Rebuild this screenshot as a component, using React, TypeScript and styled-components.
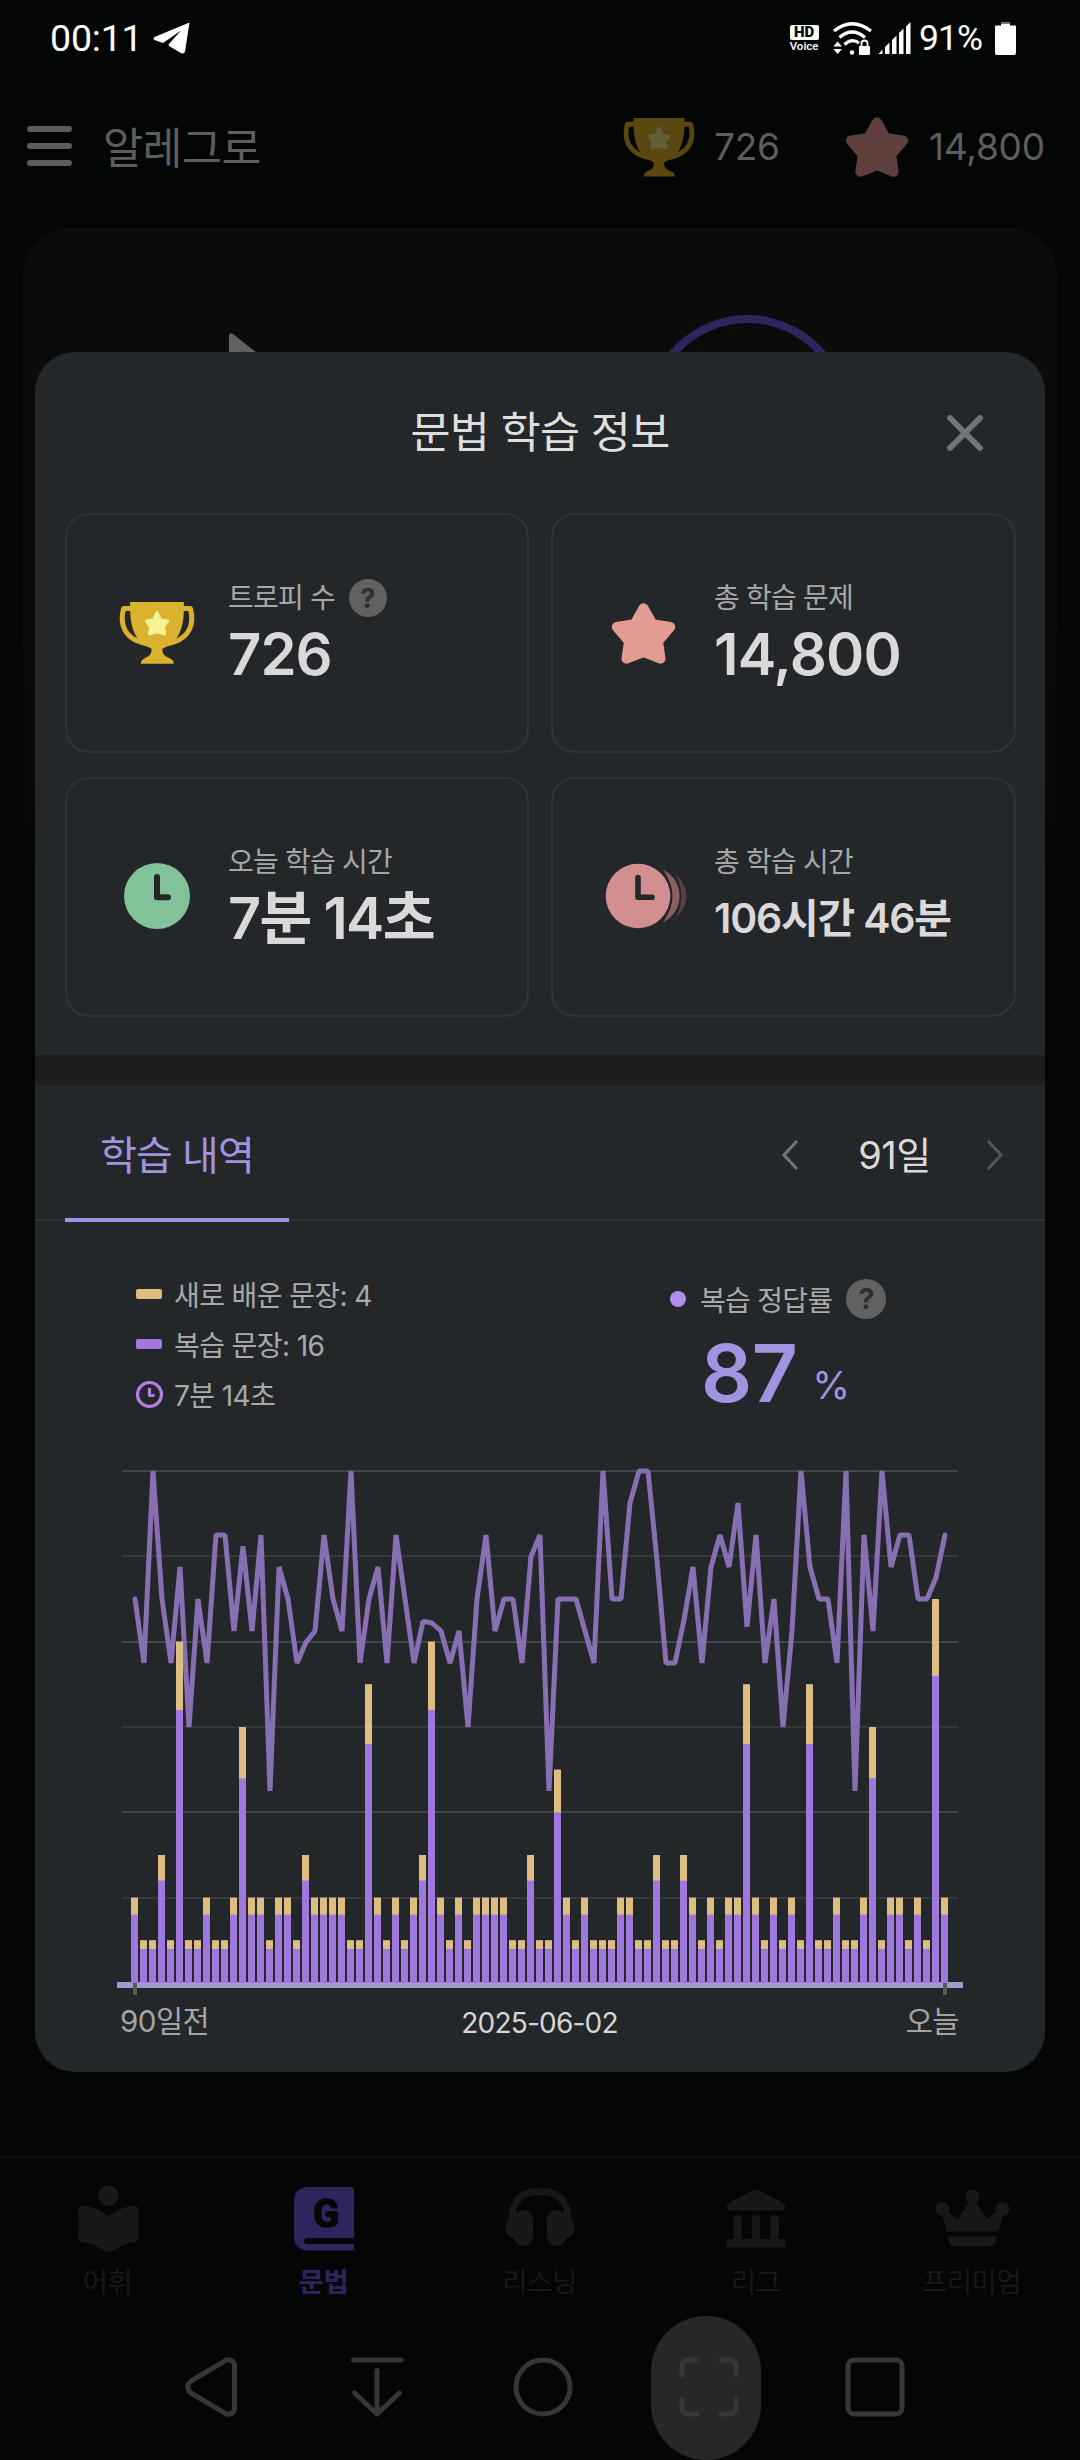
import React from "react";
import styled, { createGlobalStyle } from "styled-components";

const GlobalStyle = createGlobalStyle`
  body { margin: 0; background: #040505; }
  * { box-sizing: border-box; }
  svg { display: block; overflow: visible; flex: none; }
`;

const SANS = `Inter, "Noto Sans CJK KR", sans-serif`;

/* ---------- screen behind the dialog ---------- */

const Screen = styled.div`
  position: relative;
  width: 1080px;
  height: 2460px;
  overflow: hidden;
  display: flex;
  flex-direction: column;
  background: #040505;
  font-family: ${SANS};
`;

const StatusBar = styled.div`
  height: 76px;
  display: flex;
  align-items: center;
  justify-content: space-between;
  padding: 0 64px 0 50px;
  color: #fff;
  font-family: Roboto, sans-serif;
`;

const StatusGroup = styled.div`
  display: flex;
  align-items: center;
`;

const StatusItem = styled.div<{ $before: number }>`
  margin-left: ${(p) => p.$before}px;
`;

const StatusText = styled.span<{ $size: number; $spacing?: number }>`
  font-size: ${(p) => p.$size}px;
  letter-spacing: ${(p) => p.$spacing ?? 0}px;
  line-height: 40px;
  white-space: nowrap;
`;

const HdBadge = styled.div`
  width: 30px;
  display: flex;
  flex-direction: column;
  align-items: center;
  padding-top: 1px;
`;

const HdBox = styled.div`
  width: 29px;
  height: 15px;
  border-radius: 2px;
  background: #fff;
  color: #050505;
  font-size: 15px;
  font-weight: 900;
  line-height: 15.5px;
  text-align: center;
`;

const HdCaption = styled.div`
  font-size: 11.5px;
  font-weight: 500;
  line-height: 11px;
  margin-top: 1px;
`;

const Header = styled.div`
  height: 152px;
  display: flex;
  align-items: flex-start;
  padding: 32px 35px 0 27px;
`;

const HeaderRow = styled.div`
  width: 100%;
  height: 76px;
  display: flex;
  align-items: center;
`;

const AppTitle = styled.div`
  margin-left: 31px;
  padding-top: 3px;
  font-size: 43.5px;
  line-height: 60px;
  letter-spacing: -0.5px;
  color: #5e5e5e;
  flex: 1;
`;

const HeaderCount = styled.div<{ $width: number }>`
  width: ${(p) => p.$width}px;
  padding-top: 2px;
  font-size: 37px;
  line-height: 60px;
  letter-spacing: -0.2px;
  color: #5e5e5e;
  white-space: nowrap;
`;

const HeaderIcon = styled.div<{ $right: number }>`
  margin-right: ${(p) => p.$right}px;
  padding-top: 2px;
`;

const HeroCard = styled.div`
  margin: 0 23px;
  height: 660px;
  border-radius: 46px;
  background: linear-gradient(#0c0b0c 60%, #040505);
  display: flex;
  justify-content: space-between;
  padding: 87px 208px 0 205px;
`;

const PlayMark = styled.div`
  padding-top: 17px;
`;

const Spacer = styled.div`
  flex: 1;
`;

const TabBar = styled.nav`
  height: 160px;
  border-top: 2px solid #0d1212;
  display: grid;
  grid-template-columns: repeat(5, 216px);
`;

const TabItem = styled.div<{ $active?: boolean }>`
  display: flex;
  flex-direction: column;
  align-items: center;
  padding-top: 27px;
  color: ${(p) => (p.$active ? "#30245f" : "#181818")};
  font-weight: ${(p) => (p.$active ? 700 : 400)};
  font-size: 27.5px;
  letter-spacing: -0.5px;
`;

const TabLabel = styled.div`
  margin: 12px 1px 0 0;
  line-height: 36px;
`;

const SystemNav = styled.div`
  height: 144px;
  display: flex;
  align-items: center;
  padding-left: 156px;
`;

const SystemKey = styled.div`
  width: 110px;
  height: 144px;
  margin-right: 56px;
  padding-bottom: 2px;
  flex: none;
  display: flex;
  align-items: center;
  justify-content: center;
`;

const PressedKey = styled(SystemKey)`
  margin: 0 59px 0 -3px;
  padding-left: 6px;
  border-radius: 55px;
  background: #272727;
`;

/* ---------- dialog ---------- */

const Dialog = styled.section`
  position: absolute;
  left: 35px;
  top: 352px;
  width: 1010px;
  height: 1720px;
  border-radius: 40px;
  background: #24272a;
  display: flex;
  flex-direction: column;
  overflow: hidden;
`;

const DialogHeader = styled.header`
  height: 161px;
  display: grid;
  grid-template-columns: 100px 1fr 100px;
  align-items: center;
`;

const DialogTitle = styled.h1`
  grid-column: 2;
  margin: 0;
  padding-bottom: 2px;
  font-size: 43.5px;
  font-weight: 400;
  line-height: 60px;
  letter-spacing: -0.7px;
  text-align: center;
  color: #dedede;
`;

const CloseButton = styled.div`
  display: flex;
  padding: 0 0 0 2px;
`;

const CardGrid = styled.div`
  display: grid;
  grid-template-columns: 464px 465px;
  grid-template-rows: 240px 240px;
  column-gap: 22px;
  row-gap: 24px;
  padding-left: 30px;
`;

const Card = styled.div`
  border: 2px solid #313437;
  border-radius: 24px;
  display: flex;
  align-items: center;
  padding-left: 50px;
`;

const CardIcon = styled.div`
  width: 80px;
  display: flex;
  justify-content: center;
  margin-right: 31px;
`;

const CardBody = styled.div`
  padding-top: 2px;
`;

const CardLabel = styled.div`
  height: 40px;
  display: flex;
  align-items: center;
  gap: 14px;
  font-size: 28px;
  letter-spacing: -0.8px;
  line-height: 38px;
  color: #a6a7a8;
  white-space: nowrap;
`;

const CardValue = styled.div<{ $size: number; $spacing: number }>`
  height: 73px;
  line-height: 73px;
  font-size: ${(p) => p.$size}px;
  letter-spacing: ${(p) => p.$spacing}px;
  font-weight: 600;
  color: #dad8da;
  white-space: nowrap;
`;

const Help = styled.span<{ $size: number }>`
  width: ${(p) => p.$size}px;
  height: ${(p) => p.$size}px;
  line-height: ${(p) => p.$size}px;
  border-radius: 50%;
  background: #616161;
  color: #2d3032;
  font-size: ${(p) => p.$size * 0.72}px;
  font-weight: 700;
  letter-spacing: 0;
  text-align: center;
`;

const Band = styled.div`
  height: 30px;
  margin-top: 38px;
  background: #1b1c1e;
`;

const TabRow = styled.div`
  height: 137px;
  display: flex;
  align-items: stretch;
  justify-content: space-between;
  padding: 0 42px 0 30px;
  background: linear-gradient(#323538, #323538) 0 134px / 100% 2px no-repeat;
`;

const HistoryTab = styled.div`
  width: 224px;
  border-bottom: 4px solid #a093e0;
  font-size: 40px;
  line-height: 142px;
  letter-spacing: -1px;
  text-align: center;
  color: #a093e0;
`;

const Period = styled.div`
  display: flex;
  align-items: center;
  padding-top: 2px;
`;

const PeriodText = styled.div`
  width: 189px;
  padding: 0 0 5px 4px;
  text-align: center;
  font-size: 38px;
  letter-spacing: -0.5px;
  color: #dadada;
`;

const Summary = styled.div`
  height: 242px;
  display: grid;
  grid-template-columns: 534px 1fr;
  padding: 47px 0 0 101px;
`;

const Legend = styled.div`
  display: flex;
  flex-direction: column;
`;

const LegendRow = styled.div`
  height: 50px;
  display: flex;
  align-items: center;
  font-size: 28px;
  letter-spacing: -0.6px;
  color: #a8a9aa;
  white-space: nowrap;
`;

const LegendMark = styled.div`
  width: 38px;
`;

const Swatch = styled.div<{ $color: string }>`
  width: 26px;
  height: 10px;
  border-radius: 2px;
  background: ${(p) => p.$color};
`;

const RateLabel = styled.div`
  height: 60px;
  display: flex;
  align-items: center;
  gap: 14px;
  font-size: 28px;
  letter-spacing: -0.7px;
  color: #a8a9aa;
  white-space: nowrap;
`;

const RateDot = styled.span`
  width: 16px;
  height: 16px;
  border-radius: 50%;
  background: #ae8eea;
`;

const RateValue = styled.div`
  display: flex;
  align-items: baseline;
  padding-left: 31px;
  gap: 15px;
  color: #a093e0;
`;

const RateNumber = styled.span`
  font-size: 80px;
  line-height: 88px;
  font-weight: 600;
  letter-spacing: -0.5px;
`;

const RateUnit = styled.span`
  font-size: 38.5px;
  transform: translateY(-3px);
`;

const ChartArea = styled.div`
  padding-left: 82px;
`;

const AxisLabels = styled.div`
  display: grid;
  grid-template-columns: 1fr 1fr 1fr;
  align-items: center;
  height: 44px;
  margin-top: 1px;
  padding: 0 86px 0 85px;
  font-size: 29.5px;
  color: #a3a4a5;
`;

const AxisLabel = styled.span<{ $align: string }>`
  text-align: ${(p) => p.$align};
  letter-spacing: -0.5px;
`;

const AxisDate = styled.span`
  text-align: center;
  padding-top: 8px;
  font-size: 28px;
  letter-spacing: -0.8px;
  color: #d6d6d6;
`;

/* ---------- icons ---------- */

const Star = ({ w, color }: { w: number; color: string }) => (
  <svg width={w} height={(w * 62) / 65} viewBox="0 0 65 62">
    <path
      d="M32.5 6.3 L41.5 22.2 L59.2 25 L47 39.2 L49.5 56.7 L32.5 50 L15.5 56.7 L18 39.2 L5.8 25 L23.5 22.2Z"
      fill={color}
      stroke={color}
      strokeWidth="10"
      strokeLinejoin="round"
    />
  </svg>
);

const Trophy = ({ w, color, star }: { w: number; color: string; star: string }) => (
  <svg width={w} height={(w * 61) / 75} viewBox="0 0 75 61">
    <path
      d="M13 6.5 H4.5 C1 20 3 38 31 42 M62 6.5 H70.5 C74 20 72 38 44 42"
      fill="none"
      stroke={color}
      strokeWidth="5"
      strokeLinejoin="round"
    />
    <path
      d="M11 0 H64 V8 C64 22 60 33 55 38 C50 42 46 45 43 46 C42 52 46 54 51 56 Q54 57.5 54 61 H21.5 Q21.5 57.5 24.5 56 C29 54 33 52 32 46 C29 45 25 42 20 38 C15 33 11 22 11 8Z"
      fill={color}
    />
    <path
      d="M37.5 10.5 L41 17.5 L48 18.8 L43.8 24.5 L45 31.5 L37.5 29.5 L30 31.5 L31.2 24.5 L27 18.8 L34 17.5Z"
      fill={star}
      stroke={star}
      strokeWidth="3"
      strokeLinejoin="round"
    />
  </svg>
);

const GreenClock = () => (
  <svg width="66" height="66" viewBox="0 0 66 66">
    <circle cx="33" cy="32" r="33" fill="#82c298" />
    <path d="M33 13 V33.2 H44" fill="none" stroke="#24272a" strokeWidth="6" strokeLinecap="round" strokeLinejoin="round" />
  </svg>
);

const StackedClock = () => (
  <svg width="75" height="64" viewBox="0 1 75 64">
    <path d="M69 9.5 Q80.5 20 80.5 32 Q80.5 44 69 54.5 Q75.5 43 75.5 32 Q75.5 21 69 9.5Z" fill="#574347" />
    <path d="M57 5.5 Q66 18 66 32 Q66 46 57 58.5 Q73.5 49 73.5 32 Q73.5 15 57 5.5Z" fill="#8b6063" />
    <circle cx="32" cy="32" r="34.5" fill="#24272a" />
    <circle cx="32" cy="32" r="32.3" fill="#d38e90" />
    <path d="M32 13.5 V33.2 H46" fill="none" stroke="#24272a" strokeWidth="5.6" strokeLinecap="round" strokeLinejoin="round" />
  </svg>
);

const Telegram = () => (
  <svg width="37" height="32" viewBox="0 0 37 32">
    <path d="M36.5 0.5 L1.5 15 Q-0.5 16.5 1.5 18 L10 21 L28 8.5 L15.5 22.5 L16 24 L28 31 Q31 32.5 32 29.5Z" fill="#fff" />
  </svg>
);

const Wifi = () => (
  <svg width="39" height="33" viewBox="0 0 39 33">
    <g fill="none" stroke="#fff" strokeWidth="3.2">
      <path d="M1 9 Q19 -5.5 38 9" />
      <path d="M6.5 15.5 Q19 4.5 32 15.5" />
      <path d="M11.5 22.5 Q19 15.5 26 21" />
    </g>
    <path d="M4.5 19.5 L9 24.5 H0.5Z M4.5 32 L9 27 H0.5Z" fill="#fff" />
    <circle cx="19" cy="30.5" r="2.2" fill="#fff" />
    <rect x="26" y="24" width="11" height="9" rx="1" fill="#fff" />
    <path d="M28.5 24 V21.5 Q28.5 18.5 31.5 18.5 Q34.5 18.5 34.5 21.5 V24" fill="none" stroke="#fff" strokeWidth="1.8" />
  </svg>
);

const Signal = () => (
  <svg width="33" height="32" viewBox="0 0 33 32">
    <path d="M0.5 32 L4.5 27.5 V32Z M7 25 L11.5 20.5 V32 H7Z M14 18 L18.5 13.5 V32 H14Z M21 11 L25.5 6.5 V32 H21Z M28 4.5 L32.5 0 V32 H28Z" fill="#fff" />
  </svg>
);

const Battery = () => (
  <svg width="21" height="33" viewBox="0 0 21 33">
    <rect x="6" y="0" width="9" height="3" fill="#777" />
    <path d="M6 2 H15 V3.5 H20 Q21 3.5 21 4.5 V31 Q21 33 19 33 H2 Q0 33 0 31 V4.5 Q0 3.5 1 3.5 H6Z" fill="#fff" />
  </svg>
);

const Reader = () => (
  <svg width="61" height="67" viewBox="0 0 61 67" fill="#181818">
    <circle cx="30.5" cy="10.5" r="10.3" />
    <path d="M30.5 31.5 Q19 22 5 20.5 Q0.5 20.5 0.5 25 V52 Q0.5 57 5.5 57.5 Q16 58.5 25.5 65.5 Q30.5 68 35.5 65.5 Q45 58.5 55.5 57.5 Q60.5 57 60.5 52 V25 Q60.5 20.5 56 20.5 Q42 22 30.5 31.5Z" />
  </svg>
);

const GrammarBook = () => (
  <svg width="60" height="67" viewBox="0 0 60 67">
    <path d="M14 2 H57 Q60 2 60 5 V53 H13 Q10 53.5 10 56 Q10 59 13 59 H60 V62.5 Q60 65.5 57 65.5 H14 Q0 64.5 0 51 V16 Q0 3 14 2Z" fill="#30245f" />
    <text
      x="32"
      y="41.5"
      textAnchor="middle"
      fontFamily="Roboto, sans-serif"
      fontWeight="700"
      fontSize="38"
      fill="#040505"
      stroke="#040505"
      strokeWidth="1.6"
      strokeLinejoin="round"
    >
      G
    </text>
  </svg>
);

const Headphones = () => (
  <svg width="70" height="67" viewBox="0 0 70 67" fill="#181818">
    <path d="M7 34 Q7 6.5 35 6.5 Q63 6.5 63 34" fill="none" stroke="#181818" strokeWidth="7" />
    <path d="M11 31 Q0 34 0 42.5 Q0 52 11 53.5Z M59 31 Q70 34 70 42.5 Q70 52 59 53.5Z" />
    <rect x="9" y="25" width="19" height="36" rx="9.5" />
    <rect x="42" y="25" width="19" height="36" rx="9.5" />
  </svg>
);

const Bank = () => (
  <svg width="58" height="67" viewBox="0 0 58 67" fill="#181818">
    <path d="M25 6 Q29 4 33 6 L56 18 Q58 19.5 58 21 V23 Q58 25.5 55.5 25.5 H2.5 Q0 25.5 0 23 V21 Q0 19.5 2 18Z" />
    <path d="M6.5 55 V34 Q6.5 30 10.5 30 Q14.8 30 14.8 34 V55Z M25 55 V34 Q25 30 29 30 Q33.2 30 33.2 34 V55Z M43.5 55 V34 Q43.5 30 48 30 Q52 30 52 34 V55Z" />
    <path d="M0 56 Q0 54 2 54 H56 Q58 54 58 56 V62.5 H0Z" />
  </svg>
);

const Crown = () => (
  <svg width="75" height="67" viewBox="0 0 75 67" fill="#181818">
    <circle cx="37.5" cy="11.5" r="7" />
    <circle cx="7.5" cy="24" r="7" />
    <circle cx="67.5" cy="24" r="7" />
    <path d="M7 29 L14 27 L23 34 L34 17 H41 L52 34 L61 27 L68 29 L63.5 46.5 H11.5Z" />
    <path d="M12.5 51.5 H62 L60 58.5 Q58.5 61.5 55 61.5 H19.5 Q16 61.5 14.5 58.5Z" />
  </svg>
);

const KEY = { fill: "none", stroke: "#363636", strokeWidth: 5, strokeLinecap: "round", strokeLinejoin: "round" } as const;

const BackKey = () => (
  <svg width="56" height="60" viewBox="0 0 56 60" {...KEY}>
    <path d="M42 3.8 Q47.5 1 51 6 Q51.5 7 51.5 9 V51 Q51.5 53 51 54 Q47.5 59 42 56.2 L8 36 Q1.5 30 8 24Z" />
  </svg>
);

const DownKey = () => (
  <svg width="56" height="60" viewBox="0 0 56 60" {...KEY}>
    <path d="M4.5 3 H52 M28 13.5 V57 M5.5 36 L28 57 L50.5 36" />
  </svg>
);

const HomeKey = () => (
  <svg width="60" height="60" viewBox="0 0 60 60" {...KEY}>
    <circle cx="30" cy="30" r="27" />
  </svg>
);

const ScanKey = () => (
  <svg width="60" height="60" viewBox="0 0 60 60" {...KEY} strokeLinecap="butt">
    <path d="M20 3 H10 Q3 3 3 10 V20 M40 3 H50 Q57 3 57 10 V20 M20 57 H10 Q3 57 3 50 V40 M40 57 H50 Q57 57 57 50 V40" />
  </svg>
);

const SquareKey = () => (
  <svg width="60" height="60" viewBox="0 0 60 60" {...KEY}>
    <rect x="3" y="3" width="54" height="54" rx="6" />
  </svg>
);

/* ---------- chart ---------- */

/* Sentences per day in tens, one digit a day; four fifths of each bar are reviews. */
const DAYS = [
  "2113181121126221221322221172121",
  "2382121222211311521211122113113",
  "21212272121217112112612212192",
].join("");

/* Steps below a perfect score for each day. */
const MISSES = [
  4, 6, 0, 4, 6, 3, 8, 4, 6, 2, 2, 5, 2.35, 5, 2, 10, 3, 4, 6, 5.35, 5, 2, 4, 5, 0, 6, 4, 3, 6, 2, 4, 6, 4.7, 4.75, 5,
  6, 5, 8, 4, 2, 5, 4, 4, 6, 2.67, 2, 10, 4, 4, 4, 5, 6, 0, 4, 4, 1, 0, 0, 2.8, 6, 6, 4.65, 3, 6, 3, 2, 3, 1, 4.87, 2,
  6, 4, 8, 5, 0, 3, 4, 4, 6, 0, 10, 2, 5, 0, 3, 2, 2, 4, 4, 3.33, 2,
];

const TOP = 7;
const BASE = 519;
const UNIT = (BASE - TOP) / 12;
const STEP = (BASE - TOP) / 16;

const Chart = () => {
  const bars = DAYS.split("").map(Number);
  return (
    <svg width="846" height="532" viewBox="0 0 846 532">
      <rect x="823" y="92" width="9" height="427" fill="#22252a" />
      {[0, 1, 2, 3, 4, 5].map((i) => (
        <rect key={i} x="5" y={Math.round(TOP - 1 + (i * (BASE - TOP)) / 6)} width="836" height="2" fill={i % 2 ? "#353739" : "#3f4649"} />
      ))}
      <polyline
        points={MISSES.map((m, i) => `${18 + i * 9},${TOP + m * STEP}`).join(" ")}
        fill="none"
        stroke="#886fb3"
        strokeWidth="5"
        strokeLinejoin="bevel"
        strokeLinecap="round"
      />
      <rect x="0" y="518" width="846" height="6" fill="#a09ccc" />
      {bars.map((v, i) => (
        <g key={i}>
          <rect x={14 + i * 9} y={BASE - v * UNIT} width="7" height={v * UNIT} fill="#9f78dd" />
          <rect x={14 + i * 9} y={BASE - v * UNIT} width="7" height={v * UNIT * 0.2} fill="#ddbd80" />
        </g>
      ))}
      <rect x="16" y="519" width="4" height="12" fill="#585858" />
      <rect x="826" y="519" width="4" height="12" fill="#585858" />
    </svg>
  );
};

export default function App() {
  return (
    <>
      <GlobalStyle />
      <Screen>
        <StatusBar>
          <StatusGroup>
            <StatusText $size={37.5} $spacing={-0.2}>00:11</StatusText>
            <StatusItem $before={11}><Telegram /></StatusItem>
          </StatusGroup>
          <StatusGroup>
            <HdBadge>
              <HdBox>HD</HdBox>
              <HdCaption>Voice</HdCaption>
            </HdBadge>
            <StatusItem $before={14}><Wifi /></StatusItem>
            <StatusItem $before={6}><Signal /></StatusItem>
            <StatusItem $before={8}>
              <StatusText $size={35.5} $spacing={-1}>91%</StatusText>
            </StatusItem>
            <StatusItem $before={13}><Battery /></StatusItem>
          </StatusGroup>
        </StatusBar>

        <Header>
          <HeaderRow>
            <svg width="45" height="40" viewBox="0 0 45 40" fill="#5c5c5c">
              <rect y="0" width="45" height="6" rx="3" />
              <rect y="17" width="45" height="6" rx="3" />
              <rect y="34" width="45" height="6" rx="3" />
            </svg>
            <AppTitle>알레그로</AppTitle>
            <HeaderIcon $right={19}>
              <Trophy w={72} color="#5b4811" star="#605f35" />
            </HeaderIcon>
            <HeaderCount $width={131}>726</HeaderCount>
            <HeaderIcon $right={20}>
              <Star w={64} color="#5f403c" />
            </HeaderIcon>
            <HeaderCount $width={116}>14,800</HeaderCount>
          </HeaderRow>
        </Header>

        <HeroCard>
          <PlayMark>
            <svg width="50" height="60" viewBox="0 0 50 60">
              <path d="M1 4 Q1 0 5 2 L48 36 L1 60Z" fill="#5f6260" />
            </svg>
          </PlayMark>
          <svg width="203" height="203" viewBox="0 0 203 203">
            <circle cx="101.5" cy="101.5" r="97.5" fill="none" stroke="#30245f" strokeWidth="8" />
          </svg>
        </HeroCard>

        <Spacer />

        <TabBar>
          <TabItem>
            <Reader />
            <TabLabel>어휘</TabLabel>
          </TabItem>
          <TabItem $active>
            <GrammarBook />
            <TabLabel>문법</TabLabel>
          </TabItem>
          <TabItem>
            <Headphones />
            <TabLabel>리스닝</TabLabel>
          </TabItem>
          <TabItem>
            <Bank />
            <TabLabel>리그</TabLabel>
          </TabItem>
          <TabItem>
            <Crown />
            <TabLabel>프리미엄</TabLabel>
          </TabItem>
        </TabBar>

        <SystemNav>
          <SystemKey><BackKey /></SystemKey>
          <SystemKey><DownKey /></SystemKey>
          <SystemKey><HomeKey /></SystemKey>
          <PressedKey><ScanKey /></PressedKey>
          <SystemKey><SquareKey /></SystemKey>
        </SystemNav>

        <Dialog>
          <DialogHeader>
            <DialogTitle>문법 학습 정보</DialogTitle>
            <CloseButton>
              <svg width="36" height="36" viewBox="0 0 36 36">
                <path d="M3 3 L33 33 M33 3 L3 33" stroke="#70767c" strokeWidth="5.8" strokeLinecap="round" />
              </svg>
            </CloseButton>
          </DialogHeader>

          <CardGrid>
            <Card>
              <CardIcon><Trophy w={76} color="#dab22d" star="#f3f396" /></CardIcon>
              <CardBody>
                <CardLabel>트로피 수<Help $size={38}>?</Help></CardLabel>
                <CardValue $size={58} $spacing={-1}>726</CardValue>
              </CardBody>
            </Card>
            <Card>
              <CardIcon><Star w={65} color="#e29c92" /></CardIcon>
              <CardBody>
                <CardLabel>총 학습 문제</CardLabel>
                <CardValue $size={58} $spacing={-0.8}>14,800</CardValue>
              </CardBody>
            </Card>
            <Card>
              <CardIcon><GreenClock /></CardIcon>
              <CardBody>
                <CardLabel>오늘 학습 시간</CardLabel>
                <CardValue $size={57.5} $spacing={-1.7}>7분 14초</CardValue>
              </CardBody>
            </Card>
            <Card>
              <CardIcon><StackedClock /></CardIcon>
              <CardBody>
                <CardLabel>총 학습 시간</CardLabel>
                <CardValue $size={41} $spacing={-1.2}>106시간 46분</CardValue>
              </CardBody>
            </Card>
          </CardGrid>

          <Band />

          <TabRow>
            <HistoryTab>학습 내역</HistoryTab>
            <Period>
              <svg width="16" height="30" viewBox="0 0 16 30">
                <path d="M15 1 L2 15 L15 29" fill="none" stroke="#6f777b" strokeWidth="3" />
              </svg>
              <PeriodText>91일</PeriodText>
              <svg width="16" height="30" viewBox="0 0 16 30">
                <path d="M1 1 L14 15 L1 29" fill="none" stroke="#50565a" strokeWidth="3" />
              </svg>
            </Period>
          </TabRow>

          <Summary>
            <Legend>
              <LegendRow>
                <LegendMark><Swatch $color="#ddbd80" /></LegendMark>
                새로 배운 문장: 4
              </LegendRow>
              <LegendRow>
                <LegendMark><Swatch $color="#9f78dd" /></LegendMark>
                복습 문장: 16
              </LegendRow>
              <LegendRow>
                <LegendMark>
                  <svg width="27" height="27" viewBox="0 0 27 27" fill="none" stroke="#b07fe0" strokeWidth="3.2">
                    <circle cx="13.5" cy="13.5" r="12" />
                    <path d="M13.5 7 V14.5 H18.5" strokeLinejoin="round" />
                  </svg>
                </LegendMark>
                7분 14초
              </LegendRow>
            </Legend>
            <div>
              <RateLabel>
                <RateDot />복습 정답률<Help $size={40}>?</Help>
              </RateLabel>
              <RateValue>
                <RateNumber>87</RateNumber>
                <RateUnit>%</RateUnit>
              </RateValue>
            </div>
          </Summary>

          <ChartArea>
            <Chart />
          </ChartArea>

          <AxisLabels>
            <AxisLabel $align="left">90일전</AxisLabel>
            <AxisDate>2025-06-02</AxisDate>
            <AxisLabel $align="right">오늘</AxisLabel>
          </AxisLabels>
        </Dialog>
      </Screen>
    </>
  );
}
